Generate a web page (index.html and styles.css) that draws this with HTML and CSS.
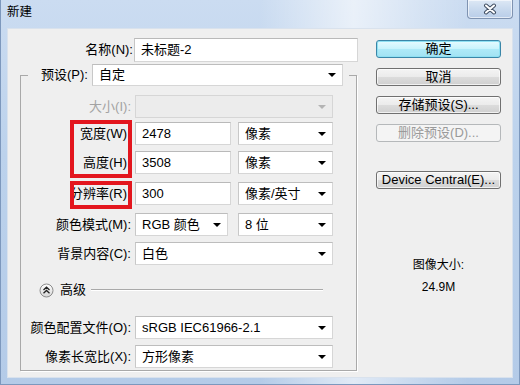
FILE: index.html
```html
<!DOCTYPE html>
<html lang="zh-CN">
<head>
<meta charset="utf-8">
<title>新建</title>
<link rel="stylesheet" href="styles.css">
</head>
<body>
<div class="window">
  <div class="titlebar">
    <span class="title">新建</span>
    <span class="close">
      <svg width="14" height="12" viewBox="0 0 14 12"><path d="M3 2.5 L11 9.5 M11 2.5 L3 9.5" stroke="#3e4c60" stroke-width="4" stroke-linecap="round"/><path d="M3 2.5 L11 9.5 M11 2.5 L3 9.5" stroke="#fff" stroke-width="2" stroke-linecap="round"/></svg>
    </span>
  </div>
  <div class="client">
    <div class="main">
      <div class="name-row">
        <span class="label">名称(N):</span>
        <span class="field">未标题-2</span>
      </div>
      <fieldset class="group">
        <legend class="legend">
          <span class="legend-inner">
            <span class="label">预设(P):</span>
            <span class="select preset">自定</span>
          </span>
        </legend>
        <div class="rows">
          <div class="row">
            <span class="label disabled">大小(I):</span>
            <span class="select is-disabled"></span>
          </div>
          <div class="row m4">
            <span class="label marked">宽度(W)</span>
            <span class="pair"><span class="field w96">2478</span><span class="select w95">像素</span></span>
          </div>
          <div class="row m6">
            <span class="label marked">高度(H)</span>
            <span class="pair"><span class="field w96">3508</span><span class="select w95">像素</span></span>
          </div>
          <div class="row m8">
            <span class="label marked">分辨率(R)</span>
            <span class="pair"><span class="field w96">300</span><span class="select w95">像素/英寸</span></span>
          </div>
          <div class="row m8">
            <span class="label">颜色模式(M):</span>
            <span class="pair"><span class="select w93">RGB 颜色</span><span class="select w95">8 位</span></span>
          </div>
          <div class="row m6">
            <span class="label">背景内容(C):</span>
            <span class="select">白色</span>
          </div>
          <div class="mark mark-wh"></div>
          <div class="mark mark-res"></div>
        </div>
        <div class="advanced">
          <svg class="adv-icon" width="15" height="15" viewBox="0 0 15 15">
            <defs><linearGradient id="g" x1="0" y1="0" x2="0" y2="1"><stop offset="0" stop-color="#ffffff"/><stop offset="1" stop-color="#d6d6d6"/></linearGradient></defs>
            <circle cx="7.5" cy="7.5" r="6.5" fill="url(#g)" stroke="#8c8c8c"/>
            <path d="M4.5 7 L7.5 4.2 L10.5 7 M4.5 10.2 L7.5 7.4 L10.5 10.2" fill="none" stroke="#222" stroke-width="1.3"/>
          </svg>
          <span class="adv-text">高级</span>
          <span class="adv-line"></span>
        </div>
        <div class="rows2">
          <div class="row">
            <span class="label">颜色配置文件(O):</span>
            <span class="select">sRGB IEC61966-2.1</span>
          </div>
          <div class="row m6">
            <span class="label">像素长宽比(X):</span>
            <span class="select">方形像素</span>
          </div>
        </div>
      </fieldset>
    </div>
    <div class="side">
      <span class="btn default">确定</span>
      <span class="btn">取消</span>
      <span class="btn">存储预设(S)...</span>
      <span class="btn is-disabled">删除预设(D)...</span>
      <span class="btn device">Device Central(E)...</span>
      <div class="info">
        <span class="info-line">图像大小:</span>
        <span class="info-line">24.9M</span>
      </div>
    </div>
  </div>
</div>
</body>
</html>
```

FILE: styles.css
```css
html, body {
  margin: 0;
  padding: 0;
}
body {
  width: 520px;
  height: 385px;
  overflow: hidden;
  font-family: "Liberation Sans", "Noto Sans CJK SC", sans-serif;
  font-size: 13px;
  color: #000;
}
.window {
  width: 520px;
  height: 385px;
  box-sizing: border-box;
  padding: 0 7px 7px;
  display: flex;
  flex-direction: column;
  background:
    linear-gradient(90deg, rgba(255,255,255,0) 50%, rgba(255,255,255,0.6) 68%, rgba(255,255,255,0.2) 82%, rgba(255,255,255,0) 90%),
    linear-gradient(180deg, #cbdcf1 0%, #bcd2ec 40%, #b4cbe8 100%);
  box-shadow: inset 1px 0 0 #7d98bd, inset -1px 0 0 #7d98bd, inset 0 -1px 0 #7d98bd;
}
.titlebar {
  height: 28px;
  flex: none;
  display: flex;
  justify-content: space-between;
  align-items: flex-start;
}
.title {
  margin-top: 4px;
  line-height: 16px;
  font-size: 12.5px;
  color: #000;
}
.close {
  width: 46px;
  height: 19px;
  box-sizing: border-box;
  border: 1px solid #7f93b1;
  border-top: none;
  border-radius: 0 0 4px 4px;
  background: linear-gradient(180deg, #dde8f5 0%, #c9daee 50%, #b9cde8 100%);
  box-shadow: inset 0 0 0 1px rgba(255,255,255,0.6);
  display: flex;
  align-items: center;
  justify-content: center;
}
.client {
  flex: 1;
  display: flex;
  background: #efefef;
  box-shadow: inset 0 0 0 1px #d9e2ed;
}
.main {
  width: 338px;
  padding: 10px 0 0 13px;
}
.label {
  text-align: right;
  line-height: 16px;
  white-space: nowrap;
}
.label.marked {
  padding-right: 4px;
}
.label.disabled {
  color: #a3a3a3;
}
.name-row {
  display: grid;
  grid-template-columns: 113px 224px;
  column-gap: 1px;
  align-items: center;
  height: 24px;
}
.field {
  display: flex;
  align-items: center;
  box-sizing: border-box;
  height: 100%;
  padding-left: 6px;
  background: #fff;
  border: 1px solid #d6d6d6;
  border-top-color: #b9b9b9;
  border-left-color: #c6c6c6;
  line-height: 16px;
  white-space: nowrap;
}
.select {
  display: flex;
  align-items: center;
  box-sizing: border-box;
  height: 100%;
  padding: 0 6px;
  background: #fff;
  border: 1px solid #d6d6d6;
  border-top-color: #bdbdbd;
  border-left-color: #c8c8c8;
  line-height: 16px;
  white-space: nowrap;
}
.select::after {
  content: "";
  margin-left: auto;
  width: 0;
  height: 0;
  border-top: 4px solid #000;
  border-left: 4px solid transparent;
  border-right: 4px solid transparent;
}
.select.is-disabled {
  background: #ececec;
  border-color: #d6d6d6;
}
.select.is-disabled::after {
  border-top-color: #b4b4b4;
}
.group {
  position: relative;
  margin: 2px 0 0;
  padding: 0 0 2px;
  width: 337px;
  box-sizing: border-box;
  min-width: 0;
  border: 1px solid #a9a9a9;
  box-shadow: 1px 1px 0 #fff;
}
.legend {
  margin-left: 7px;
  padding: 0 6px 0 13px;
}
.legend-inner {
  display: flex;
  align-items: center;
  gap: 4px;
  height: 22px;
}
.preset {
  width: 251px;
}
.rows {
  position: relative;
  padding-top: 9px;
  display: flex;
  flex-direction: column;
}
.row {
  display: grid;
  grid-template-columns: 110px 198px;
  column-gap: 4px;
  align-items: center;
  height: 23px;
}
.m4 { margin-top: 4px; }
.m6 { margin-top: 6px; }
.m8 { margin-top: 8px; }
.pair {
  display: flex;
  justify-content: space-between;
  height: 100%;
}
.w96 { width: 96px; }
.w95 { width: 95px; }
.w93 { width: 93px; }
.mark {
  position: absolute;
  left: 49px;
  width: 62px;
  box-sizing: border-box;
  border: 4px solid #e3161e;
}
.mark-wh {
  top: 34px;
  height: 58px;
}
.mark-res {
  top: 95px;
  height: 28px;
}
.advanced {
  display: flex;
  align-items: center;
  height: 16px;
  margin-top: 17px;
  padding: 0 33px 0 18px;
}
.adv-icon {
  flex: none;
}
.adv-text {
  margin-left: 6px;
  line-height: 16px;
}
.adv-line {
  flex: 1;
  margin-left: 5px;
  height: 0;
  border-top: 1px solid #a9a9a9;
  border-bottom: 1px solid #fff;
}
.rows2 {
  margin-top: 18px;
  display: flex;
  flex-direction: column;
}
.side {
  width: 125px;
  margin-left: 18px;
  padding-top: 12px;
  display: flex;
  flex-direction: column;
}
.btn {
  display: flex;
  align-items: center;
  justify-content: center;
  height: 18px;
  box-sizing: border-box;
  margin-bottom: 10px;
  border: 1px solid #707070;
  border-radius: 3px;
  background: linear-gradient(180deg, #f4f4f4 0%, #ebebeb 50%, #dcdcdc 51%, #d0d0d0 100%);
  box-shadow: inset 0 0 0 1px rgba(255,255,255,0.7);
  line-height: 16px;
  white-space: nowrap;
}
.btn.default {
  border-color: #3a86a8;
  background: linear-gradient(180deg, #e6fbff 0%, #c8f3fc 50%, #aeeaf8 51%, #a2e2f3 100%);
  box-shadow: inset 0 0 0 1px #8fe0f2;
}
.btn.is-disabled {
  border-color: #b5b8ba;
  background: #f4f4f4;
  box-shadow: none;
  color: #9a9a9a;
}
.btn.device {
  margin-top: 19px;
}
.info {
  margin-top: 58px;
  display: flex;
  flex-direction: column;
  align-items: center;
  gap: 6px;
  font-size: 12px;
}
.info-line {
  line-height: 16px;
}
```
